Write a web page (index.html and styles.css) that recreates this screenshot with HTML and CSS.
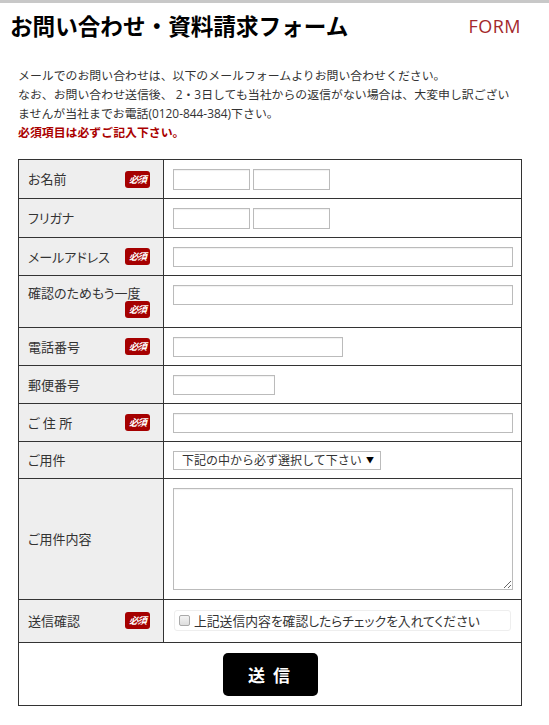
FILE: index.html
```html
<!DOCTYPE html>
<html lang="ja">
<head>
    <meta charset="UTF-8">
    <meta name="viewport" content="width=device-width, initial-scale=1.0">
    <title>お問い合わせ・資料請求フォーム</title>
    <link rel="stylesheet" href="styles.css">
</head>
<body>
    <div class="page">
        <div class="page-head">
            <h1>お問い合わせ・資料請求フォーム</h1>
            <span class="en">FORM</span>
        </div>

        <p class="intro">
            メールでのお問い合わせは、以下のメールフォームよりお問い合わせください。<br>
            なお、お問い合わせ送信後、 2・3日しても当社からの返信がない場合は、大変申し訳ございませんが当社までお電話(0120-844-384)下さい。<br>
            <strong>必須項目は必ずご記入下さい。</strong>
        </p>

        <form class="contact" onsubmit="return false;">
            <table class="form-table">
                <tr>
                    <th><div class="lbl"><span>お名前</span><span class="req">必須</span></div></th>
                    <td>
                        <div class="pair">
                            <input type="text" class="w-half">
                            <input type="text" class="w-half">
                        </div>
                    </td>
                </tr>
                <tr>
                    <th><div class="lbl"><span>フリガナ</span></div></th>
                    <td>
                        <div class="pair">
                            <input type="text" class="w-half">
                            <input type="text" class="w-half">
                        </div>
                    </td>
                </tr>
                <tr>
                    <th><div class="lbl"><span>メールアドレス</span><span class="req">必須</span></div></th>
                    <td><input type="text" class="w-full"></td>
                </tr>
                <tr>
                    <th><div class="lbl"><span>確認のためもう一度</span><span class="req">必須</span></div></th>
                    <td><input type="text" class="w-full"></td>
                </tr>
                <tr>
                    <th><div class="lbl"><span>電話番号</span><span class="req">必須</span></div></th>
                    <td><input type="text" class="w-tel"></td>
                </tr>
                <tr>
                    <th><div class="lbl"><span>郵便番号</span></div></th>
                    <td><input type="text" class="w-zip"></td>
                </tr>
                <tr>
                    <th><div class="lbl"><span>ご 住 所</span><span class="req">必須</span></div></th>
                    <td><input type="text" class="w-full"></td>
                </tr>
                <tr>
                    <th><div class="lbl"><span>ご用件</span></div></th>
                    <td>
                        <span class="select-wrap">
                            <select>
                                <option>下記の中から必ず選択して下さい</option>
                            </select>
                        </span>
                    </td>
                </tr>
                <tr>
                    <th><div class="lbl"><span>ご用件内容</span></div></th>
                    <td><textarea></textarea></td>
                </tr>
                <tr class="row-check">
                    <th><div class="lbl"><span>送信確認</span><span class="req">必須</span></div></th>
                    <td>
                        <label class="check">
                            <input type="checkbox">
                            <span>上記送信内容を確認したらチェックを入れてください</span>
                        </label>
                    </td>
                </tr>
                <tr>
                    <td colspan="2" class="submit-cell">
                        <button type="submit" class="btn-send">送 信</button>
                    </td>
                </tr>
            </table>
        </form>
    </div>
</body>
</html>
```

FILE: styles.css
```css
html, body {
    margin: 0;
    padding: 0;
}
body {
    font-family: "Open Sans", "Noto Sans CJK JP", sans-serif;
    font-feature-settings: "palt";
    color: #333;
    background: #fff;
}
.page {
    border-top: 3px solid #c8c8c8;
}
.page-head {
    display: flex;
    justify-content: space-between;
    align-items: center;
    padding: 8px 28px 0 10px;
}
h1 {
    margin: 0;
    font-size: 22.6px;
    line-height: 30px;
    font-weight: bold;
    font-feature-settings: normal;
    color: #000;
    font-family: "Noto Sans CJK JP", sans-serif;
}
.en {
    font-size: 18px;
    color: #a3282c;
    letter-spacing: 0.5px;
}
.intro {
    margin: 25px 0 0;
    padding: 0 38px 0 18px;
    font-size: 11.9px;
    line-height: 19px;
    font-feature-settings: normal;
}
.intro strong {
    color: #a00;
}

.contact {
    margin: 17px 0 0 18px;
}
.form-table {
    width: 504px;
    border-collapse: collapse;
    table-layout: fixed;
    font-size: 13px;
}
.form-table th,
.form-table td {
    border: 1px solid #333;
}
.form-table th {
    width: 122px;
    padding: 9px 13px 9px 9px;
    background: #eee;
    font-weight: normal;
    text-align: left;
    vertical-align: middle;
}
.form-table td {
    padding: 9px 8px 8px 9px;
    vertical-align: top;
}
.lbl {
    display: flex;
    flex-wrap: wrap;
    align-items: center;
    line-height: 16px;
}
.req {
    margin-left: auto;
    width: 25px;
    height: 17px;
    border-radius: 3px;
    background: #a50000;
    color: #fff;
    font-size: 9.5px;
    font-weight: bold;
    font-style: italic;
    line-height: 17px;
    text-align: center;
    letter-spacing: -1px;
}

input[type="text"],
select,
textarea {
    box-sizing: border-box;
    margin: 0;
    border: 1px solid #bbb;
    border-radius: 0;
    background: #fff;
    font: inherit;
    color: #333;
    box-shadow: inset 0 1px 1px rgba(0, 0, 0, 0.06);
}
input[type="text"] {
    display: block;
    height: 20px;
    padding: 0 4px;
}
.pair {
    display: flex;
    gap: 3px;
}
.pair input[type="text"] {
    height: 21px;
}
.w-half { width: 77px; }
.w-full { width: 100%; }
.w-tel { width: 170px; }
.w-zip { width: 102px; margin-bottom: 1px; }

.select-wrap {
    position: relative;
    display: block;
    width: 208px;
}
.select-wrap::after {
    content: "▼";
    position: absolute;
    right: 7px;
    top: 3px;
    font-size: 8px;
    color: #000;
    pointer-events: none;
}
select {
    -webkit-appearance: none;
    appearance: none;
    display: block;
    width: 100%;
    height: 19px;
    padding: 0 8px;
    font-size: 12px;
    font-feature-settings: normal;
    line-height: 17px;
    box-shadow: none;
}
textarea {
    display: block;
    width: 100%;
    height: 102px;
    margin-bottom: 1px;
    resize: vertical;
}

.row-check th,
.row-check td {
    padding-top: 10px;
    padding-bottom: 11px;
}
.check {
    display: flex;
    align-items: center;
    gap: 4px;
    box-sizing: border-box;
    height: 21px;
    margin-left: 1px;
    margin-right: 2px;
    padding: 0 4px;
    border: 1px solid #eee;
    border-radius: 3px;
    font-size: 12.8px;
}
.check input {
    -webkit-appearance: none;
    appearance: none;
    flex: none;
    width: 11px;
    height: 11px;
    margin: 0;
    border: 1px solid #aaa;
    border-radius: 2px;
    background: linear-gradient(#f4f4f4, #ddd);
}

.submit-cell {
    text-align: center;
    vertical-align: middle;
}
.form-table .submit-cell {
    padding: 10px 0 9px;
}
.btn-send {
    display: block;
    margin: 0 auto;
    width: 95px;
    height: 43px;
    border: 0;
    border-radius: 5px;
    background: #000;
    color: #fff;
    font-family: "Noto Sans CJK JP", sans-serif;
    font-size: 17px;
    font-weight: bold;
    letter-spacing: 2px;
    cursor: pointer;
}
```
